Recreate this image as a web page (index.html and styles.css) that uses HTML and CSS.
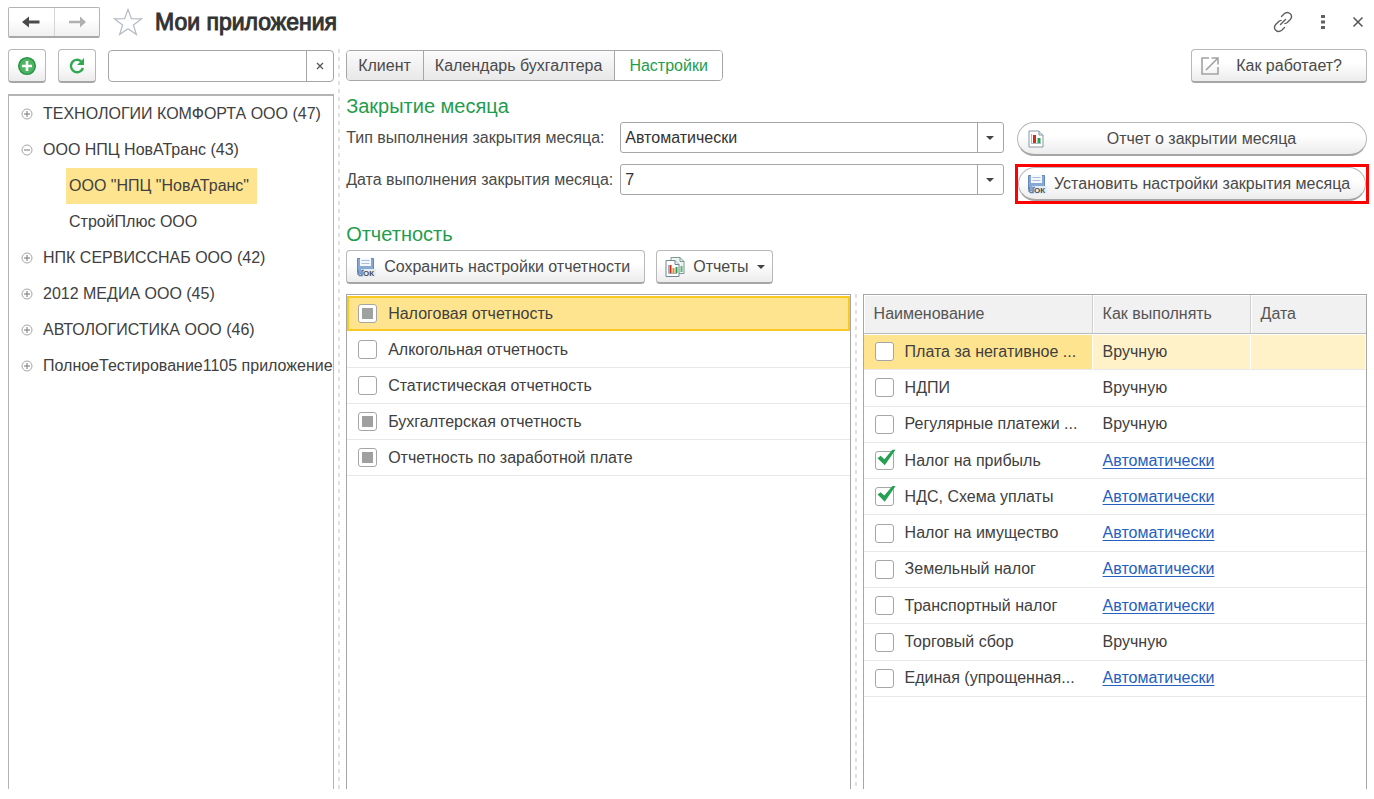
FILE: index.html
```html
<!DOCTYPE html>
<html lang="ru">
<head>
<meta charset="utf-8">
<title>Мои приложения</title>
<link rel="stylesheet" href="styles.css">
</head>
<body>
<svg class="defs" aria-hidden="true">
  <symbol id="i-plus" viewBox="0 0 12 12"><circle cx="6" cy="6" r="5" fill="none" stroke="#a6a6a6"/><path d="M3 6h6M6 3v6" stroke="#777"/></symbol>
  <symbol id="i-minus" viewBox="0 0 12 12"><circle cx="6" cy="6" r="5" fill="none" stroke="#a6a6a6"/><path d="M3 6h6" stroke="#777"/></symbol>
  <symbol id="i-save" viewBox="0 0 20 20">
    <path d="M1.500 1.500h16v15h-14l-2-2z" fill="#86a8d4" stroke="#6487b5"/>
    <path d="M4 1h11v8H4z" fill="#f4f8fc"/><path d="M5.500 3.500h8M5.500 6.500h8" stroke="#a9bdd6"/>
    <path d="M5 12h15v8H5z" fill="#e6ecf4"/>
    <path d="M2 13v4l1.500 1.500H6v-5h2" fill="none" stroke="#5d7fae" stroke-width="1.500"/>
    <text x="7" y="19" class="icon-text">ОК</text>
  </symbol>
  <symbol id="i-report" viewBox="0 0 16 18">
    <path d="M1 1h10l4 4v12H1z" fill="#fff" stroke="#8698a3"/><path d="M11 1v4h4" fill="#dce6ea" stroke="#8698a3"/>
    <path d="M3.500 4v9.500H13" fill="none" stroke="#a9bbc2"/><path d="M5 5h3v8H5z" fill="#e2231a"/><path d="M9.500 8h3v5h-3z" fill="#2aa150"/>
  </symbol>
  <symbol id="i-reports" viewBox="0 0 20 20">
    <path d="M6 .5h9l4 4v12H6z" fill="#eef4f1" stroke="#7b9a8d"/><path d="M15 .5v4h4" fill="none" stroke="#7b9a8d"/><path d="M15.500 9h2v6h-2z" fill="#5fb37a"/>
    <path d="M1 3.500h9l4 4v12H1z" fill="#fff" stroke="#71868f"/><path d="M10 3.500v4h4" fill="#e4ecee" stroke="#71868f"/>
    <path d="M3.500 8v8.500H12" fill="none" stroke="#9bb0b8"/><path d="M4.500 8h2v8h-2z" fill="#e2231a"/><path d="M7.500 11h2v5h-2z" fill="#e88b2d"/><path d="M10.500 10h2v6h-2z" fill="#2aa150"/>
  </symbol>
</svg>

<div class="page">
  <header class="top">
    <div class="history">
      <button type="button" aria-label="Назад"><svg width="20" height="12" viewBox="0 0 20 12"><path d="M1 6l7-5.500v4h10.500v3H8v4z" fill="#4a4a4a"/></svg></button>
      <button type="button" aria-label="Вперед"><svg width="20" height="12" viewBox="0 0 20 12"><path d="M19 6l-6-5.500v4.300H2v2.400h11v4.300z" fill="#b0b0b0"/></svg></button>
    </div>
    <svg class="star" width="30" height="28" viewBox="0 0 30 28"><path d="M15 1.500l3.400 9.200 10 .2-8 6 3 9.600-8.400-5.800-8.400 5.800 3-9.600-8-6 10-.2z" fill="#fff" stroke="#b3bac4" stroke-width="1.200"/></svg>
    <h1>Мои приложения</h1>
    <div class="window-tools">
      <button type="button" aria-label="Ссылка"><svg width="22" height="22" viewBox="0 0 22 22" fill="none" stroke="#606060" stroke-width="1.400" stroke-linecap="round"><path d="M9.500 5.500l2.700-2.700c4.500-3.500 9.500 1.500 6.100 5.700l-3 3c-.8.700-1.600 1-2.400 1.100"/><path d="M12.500 16.500l-2.700 2.700c-4.500 3.500-9.500-1.500-6.100-5.700l3-3c.8-.7 1.600-1 2.400-1.100"/><path d="M8.500 13.500l5-5"/></svg></button>
      <button type="button" aria-label="Меню"><svg width="6" height="16" viewBox="0 0 6 16" fill="#606060"><path d="M1 1h4v3H1zM1 6.500h4v3H1zM1 12h4v3H1z"/></svg></button>
      <button type="button" aria-label="Закрыть"><svg width="12" height="12" viewBox="0 0 12 12"><path d="M1.500 1.500l9 9M10.500 1.500l-9 9" stroke="#555" stroke-width="1.500"/></svg></button>
    </div>
  </header>

  <div class="workspace">
    <aside class="sidebar">
      <div class="side-tools">
        <button class="btn square" type="button" aria-label="Добавить"><svg width="20" height="20" viewBox="0 0 20 20"><circle cx="10" cy="10" r="8.300" fill="#4db562" stroke="#28954a" stroke-width="1.500"/><path d="M5 10h10M10 5v10" stroke="#fff" stroke-width="2.600"/></svg></button>
        <button class="btn square" type="button" aria-label="Обновить"><svg width="20" height="20" viewBox="0 0 20 20"><path d="M14 5.200A6.200 6.200 0 1 0 16 12" fill="none" stroke="#30a950" stroke-width="2.400"/><path d="M17 2v7h-7l2-2 3-3z" fill="#30a950"/></svg></button>
        <div class="search"><input type="text" aria-label="Поиск"><button type="button" aria-label="Очистить"><svg width="8" height="8" viewBox="0 0 8 8"><path d="M1 1l6 6M7 1L1 7" stroke="#555" stroke-width="1.300"/></svg></button></div>
      </div>
      <ul class="tree">
        <li><svg><use href="#i-plus"/></svg><span>ТЕХНОЛОГИИ КОМФОРТА ООО (47)</span></li>
        <li><svg><use href="#i-minus"/></svg><span>ООО НПЦ НовАТранс (43)</span></li>
        <li class="child"><span class="selected">ООО "НПЦ "НовАТранс"</span></li>
        <li class="child"><span>СтройПлюс ООО</span></li>
        <li><svg><use href="#i-plus"/></svg><span>НПК СЕРВИССНАБ ООО (42)</span></li>
        <li><svg><use href="#i-plus"/></svg><span>2012 МЕДИА ООО (45)</span></li>
        <li><svg><use href="#i-plus"/></svg><span>АВТОЛОГИСТИКА ООО (46)</span></li>
        <li><svg><use href="#i-plus"/></svg><span>ПолноеТестирование1105 приложение</span></li>
      </ul>
    </aside>
    <div class="splitter"></div>
    <main class="main">
      <div class="main-tools">
        <nav class="tabs">
          <button type="button">Клиент</button>
          <button type="button">Календарь бухгалтера</button>
          <button type="button" class="active">Настройки</button>
        </nav>
        <button class="btn how" type="button"><svg width="18" height="18" viewBox="0 0 18 18" fill="none" stroke="#a3a3a3" stroke-width="1.600"><path d="M8 1H1v16h16v-7M10.500 1H17v6.500M17 1L5 13"/></svg><span>Как работает?</span></button>
      </div>

      <h2>Закрытие месяца</h2>
      <div class="form">
        <label for="type">Тип выполнения закрытия месяца:</label>
        <div class="combo"><select id="type"><option>Автоматически</option></select></div>
        <button class="btn pill" type="button"><svg width="20" height="18"><use href="#i-report"/></svg><span>Отчет о закрытии месяца</span></button>
        <label for="date">Дата выполнения закрытия месяца:</label>
        <div class="combo"><select id="date"><option>7</option></select></div>
        <div class="highlight"><button class="btn pill" type="button"><svg width="20" height="20"><use href="#i-save"/></svg><span>Установить настройки закрытия месяца</span></button></div>
      </div>

      <h2 class="reports">Отчетность</h2>
      <div class="report-tools">
        <button class="btn" type="button"><svg width="20" height="20"><use href="#i-save"/></svg><span>Сохранить настройки отчетности</span></button>
        <button class="btn menu" type="button"><svg width="20" height="20"><use href="#i-reports"/></svg><span>Отчеты</span><i class="caret"></i></button>
      </div>

      <div class="panels">
        <div class="list">
          <label class="current"><input type="checkbox" class="partial"><span>Налоговая отчетность</span></label>
          <label><input type="checkbox"><span>Алкогольная отчетность</span></label>
          <label><input type="checkbox"><span>Статистическая отчетность</span></label>
          <label><input type="checkbox" class="partial"><span>Бухгалтерская отчетность</span></label>
          <label><input type="checkbox" class="partial"><span>Отчетность по заработной плате</span></label>
        </div>
        <div class="splitter"></div>
        <div class="grid">
          <table>
            <colgroup><col class="c-name"><col class="c-how"><col></colgroup>
            <thead><tr><th>Наименование</th><th>Как выполнять</th><th>Дата</th></tr></thead>
            <tbody>
              <tr class="current"><td><label><input type="checkbox"><span>Плата за негативное ...</span></label></td><td>Вручную</td><td></td></tr>
              <tr><td><label><input type="checkbox"><span>НДПИ</span></label></td><td>Вручную</td><td></td></tr>
              <tr><td><label><input type="checkbox"><span>Регулярные платежи ...</span></label></td><td>Вручную</td><td></td></tr>
              <tr><td><label><input type="checkbox" checked><span>Налог на прибыль</span></label></td><td><a href="#">Автоматически</a></td><td></td></tr>
              <tr><td><label><input type="checkbox" checked><span>НДС, Схема уплаты</span></label></td><td><a href="#">Автоматически</a></td><td></td></tr>
              <tr><td><label><input type="checkbox"><span>Налог на имущество</span></label></td><td><a href="#">Автоматически</a></td><td></td></tr>
              <tr><td><label><input type="checkbox"><span>Земельный налог</span></label></td><td><a href="#">Автоматически</a></td><td></td></tr>
              <tr><td><label><input type="checkbox"><span>Транспортный налог</span></label></td><td><a href="#">Автоматически</a></td><td></td></tr>
              <tr><td><label><input type="checkbox"><span>Торговый сбор</span></label></td><td>Вручную</td><td></td></tr>
              <tr><td><label><input type="checkbox"><span>Единая (упрощенная...</span></label></td><td><a href="#">Автоматически</a></td><td></td></tr>
            </tbody>
          </table>
        </div>
      </div>
    </main>
  </div>
</div>
</body>
</html>
```

FILE: styles.css
```css
* { box-sizing: border-box; }
body { margin: 0; background: #fff; color: #404040; font: 16px/20px "Liberation Sans", Arial, sans-serif; }
button, input, select { font: inherit; color: inherit; margin: 0; }
button { padding: 0; border: 0; background: none; cursor: pointer; }
svg { display: block; flex: none; }
.defs { position: absolute; width: 0; height: 0; }
.icon-text { font: bold 8px "Liberation Sans", Arial, sans-serif; fill: #4a4a4a; }

.page { display: flex; flex-direction: column; min-height: 100vh; padding: 6px 7px 10px 8px; }

.top { display: flex; align-items: center; height: 32px; }
.history { display: flex; width: 92px; height: 31px; border: 1px solid #b4b4b4; border-bottom: 2px solid #a8a8a8; border-radius: 2px; background: linear-gradient(#fff 40%, #f0f0f0); }
.history button { display: flex; flex: 1; align-items: center; justify-content: center; }
.history button + button { border-left: 1px solid #d5d5d5; }
.star { margin: 0 12px 0 13px; }
h1 { margin: 0; font-size: 23px; line-height: 28px; font-weight: 400; color: #333; -webkit-text-stroke: 1px #333; }
.window-tools { display: flex; align-items: center; gap: 26px; margin-left: auto; padding-right: 3px; }

.workspace { display: flex; flex: 1; margin-top: 11px; }
.sidebar { display: flex; flex-direction: column; width: 24%; }
.splitter { width: 2px; margin: 0 6px 0 4px; background: repeating-linear-gradient(#e0e0e0 0 4px, #fff 4px 8px); }
.main { display: flex; flex: 1; flex-direction: column; min-width: 0; }

.btn { display: flex; flex: none; align-items: center; height: 34px; padding: 0 14px 0 9px; gap: 8px; border: 1px solid #b8b8b8; border-bottom: 2px solid #a6a6a6; border-radius: 4px; background: linear-gradient(#fff 40%, #ececec); color: #4a4a4a; white-space: nowrap; }
.square { width: 38px; padding: 0; justify-content: center; }
.pill { width: 100%; padding: 0 16px 0 8px; gap: 7px; border-radius: 17px; }
.pill span { flex: 1; text-align: center; }
.how { padding: 0 24px 0 9px; gap: 17px; }
.menu { padding: 0 7px 0 8px; }
.caret { border: 4px solid transparent; border-top: 4px solid #444; border-bottom: 0; }

.side-tools { display: flex; gap: 12px; }
.search { display: flex; flex: 1; min-width: 0; height: 32px; margin-top: 1px; border: 1px solid #a6a6a6; border-radius: 4px; }
.search input { flex: 1; min-width: 0; padding: 0 6px; border: 0; outline: 0; background: none; }
.search button { display: flex; flex: none; align-items: center; justify-content: center; width: 27px; border-left: 1px solid #a6a6a6; }

.tree { flex: 1; margin: 11px 0 0; padding: 0; list-style: none; border: solid #b4b4b4; border-width: 2px 1px 0; }
.tree li { display: flex; align-items: center; height: 36px; padding-left: 12px; gap: 7px; white-space: nowrap; }
.tree svg { width: 12px; height: 12px; }
.tree span { line-height: 36px; padding-left: 3px; }
.tree .child { padding-left: 57px; }
.tree .selected { padding-right: 8px; background: #ffe48f; }

.main-tools { display: flex; justify-content: space-between; }
.tabs { display: flex; height: 31px; margin-top: 1px; border: 1px solid #a6a6a6; border-radius: 4px; overflow: hidden; }
.tabs button { padding: 0 12px 0 11px; background: linear-gradient(#fbfbfb, #e8e8e8); color: #4a4a4a; }
.tabs button + button { border-left: 1px solid #a6a6a6; }
.tabs .active { padding: 0 14px; background: #fff; color: #1f9d4d; }

h2 { margin: 11px 0 4px; font-size: 20px; line-height: 24px; font-weight: 400; color: #1f9d4d; }
.reports { margin-top: 18px; }
.form { display: grid; grid-template-columns: auto 1fr 350px; column-gap: 7px; row-gap: 8px; align-items: start; color: #4a4a4a; }
.form label { line-height: 31px; }
.combo { position: relative; height: 31px; margin-right: 6px; border: 1px solid #a6a6a6; border-radius: 3px; }
.combo select { width: 100%; height: 100%; padding: 0 30px 0 4px; border: 0; outline: 0; appearance: none; background: none; color: #333; }
.combo::before { content: ""; position: absolute; top: 0; bottom: 0; right: 25px; border-left: 1px solid #a6a6a6; }
.combo::after { content: ""; position: absolute; top: 13px; right: 9px; border: 4px solid transparent; border-top-color: #444; border-bottom: 0; pointer-events: none; }
.highlight { margin: 0 -2px; border: 3px solid #f00; }

.report-tools { display: flex; gap: 11px; }

.panels { display: grid; flex: 1; grid-template-columns: 1fr auto 1fr; margin-top: 10px; }
.list, .grid { min-width: 0; border: 1px solid #a6a6a6; border-bottom: 0; }
.list { padding-top: 1px; }
.list label { display: flex; align-items: center; height: 36px; padding: 0 11px; gap: 11px; border-bottom: 1px solid #e8e8e8; }
.list .current { height: 35px; margin-bottom: 1px; padding: 0 9px; border: 2px solid #f9c922; background: #ffe48f; }

input[type="checkbox"] { position: relative; flex: none; width: 19px; height: 19px; appearance: none; border: 1px solid #a6a6a6; border-radius: 3px; background: #fff; }
input.partial::after { content: ""; position: absolute; inset: 3px; background: #a0a0a0; }
input:checked::after { content: ""; position: absolute; width: 20px; height: 17px; top: -3px; left: 0; background: #26a053; clip-path: polygon(10% 54%, 25% 40%, 44% 60%, 84% 4%, 100% 4%, 46% 96%); }

table { width: 100%; height: 402px; table-layout: fixed; border-collapse: separate; border-spacing: 0; }
.c-name { width: 229px; }
.c-how { width: 158px; }
th { height: 39px; padding: 0 10px; border-right: 1px solid #cfcfcf; border-bottom: 1px solid #bcbcbc; background: #f1f1f1; box-shadow: inset 1px 1px #fff; font-weight: 400; text-align: left; color: #555; }
td { height: 36px; padding: 0 10px; border-bottom: 1px solid #e8e8e8; white-space: nowrap; }
td label { display: flex; align-items: center; gap: 11px; }
td:first-child { padding: 0 0 0 11px; }
th:last-child, td:last-child { border-right: 0; }
.grid .current td { border-right: 1px solid #fff; background: #fff2c8; box-shadow: inset 0 1px #fff; }
.grid .current td:first-child { background: #ffe48f; }
a { color: #2360c0; text-underline-offset: 2px; }
```
